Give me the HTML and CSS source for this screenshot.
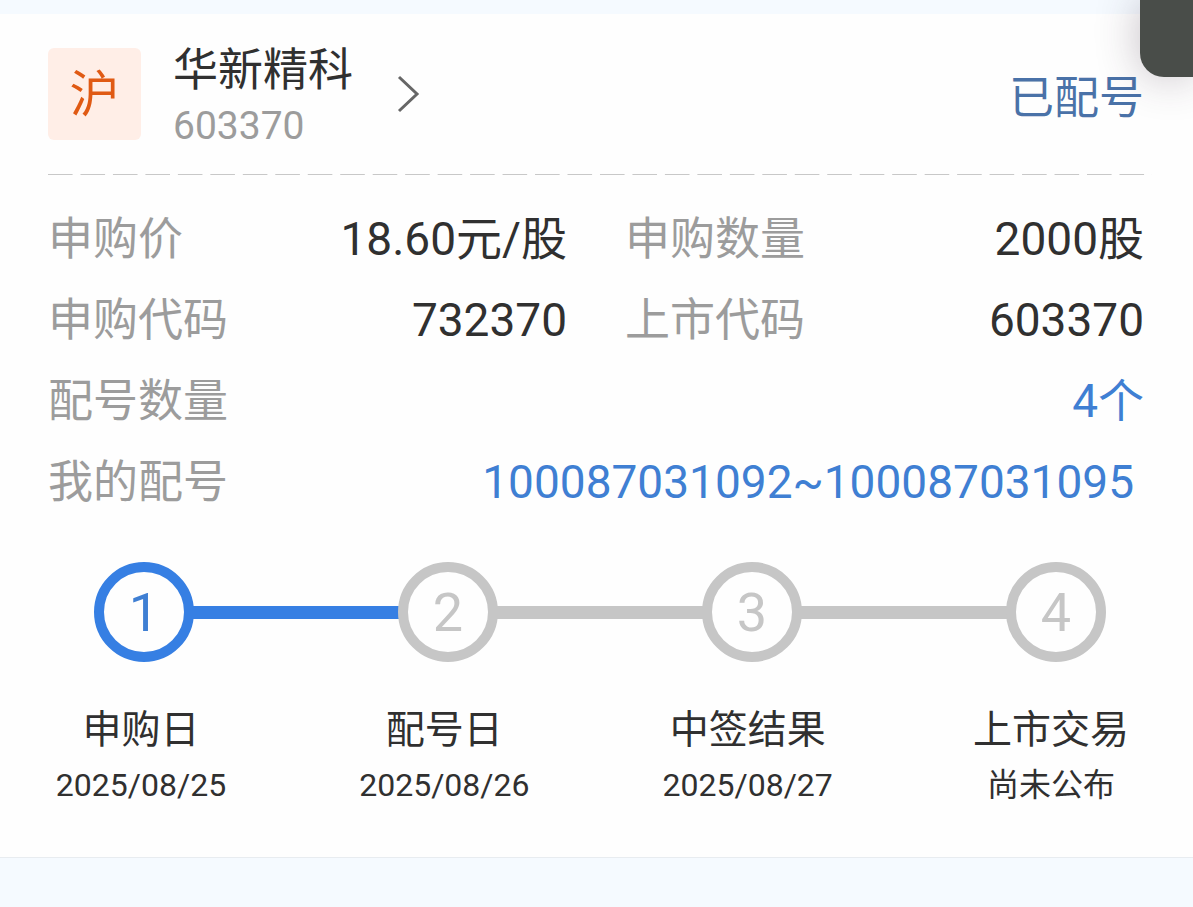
FILE: index.html
```html
<!DOCTYPE html>
<html lang="zh-CN">
<head>
    <meta charset="UTF-8">
    <meta name="viewport" content="width=device-width, initial-scale=1.0">
    <title>华新精科 603370</title>
    <link rel="stylesheet" href="styles.css">
</head>
<body>
    <div class="corner"></div>

    <main class="card">
        <header class="header">
            <a class="stock" href="#">
                <span class="market">沪</span>
                <span class="stock-info">
                    <span class="stock-name">华新精科</span>
                    <span class="stock-code">603370</span>
                </span>
                <svg class="chevron" width="24" height="40" viewBox="0 0 24 40" fill="none" stroke="#666" stroke-width="3">
                    <path d="M2 3 L20 20 L2 37"/>
                </svg>
            </a>
            <span class="status">已配号</span>
        </header>

        <div class="divider"></div>

        <dl class="details">
            <div class="row">
                <dt>申购价</dt>
                <dd>18.60元/股</dd>
            </div>
            <div class="row">
                <dt>申购数量</dt>
                <dd>2000股</dd>
            </div>
            <div class="row">
                <dt>申购代码</dt>
                <dd>732370</dd>
            </div>
            <div class="row">
                <dt>上市代码</dt>
                <dd>603370</dd>
            </div>
            <div class="row wide">
                <dt>配号数量</dt>
                <dd class="blue">4个</dd>
            </div>
            <div class="row wide">
                <dt>我的配号</dt>
                <dd class="blue numbers">100087031092~100087031095</dd>
            </div>
        </dl>

        <div class="track">
            <span class="circle active">1</span>
            <span class="line active"></span>
            <span class="circle">2</span>
            <span class="line"></span>
            <span class="circle">3</span>
            <span class="line"></span>
            <span class="circle">4</span>
        </div>

        <ol class="steps">
            <li><span class="step-name">申购日</span><span class="step-date">2025/08/25</span></li>
            <li><span class="step-name">配号日</span><span class="step-date">2025/08/26</span></li>
            <li><span class="step-name">中签结果</span><span class="step-date">2025/08/27</span></li>
            <li><span class="step-name">上市交易</span><span class="step-date">尚未公布</span></li>
        </ol>
    </main>
</body>
</html>
```
FILE: styles.css
```css
* {
    box-sizing: border-box;
}
body {
    margin: 0;
    padding: 14px 0 50px;
    background-color: #f5faff;
    color: #303030;
    font-family: Roboto, "Noto Sans CJK SC", sans-serif;
    overflow-x: hidden;
}
.card {
    background-color: #fefefe;
    border-bottom: 1px solid #e8ecf0;
    padding: 26px 49px 46px 48px;
}

/* dark floating panel in the corner */
.corner {
    position: absolute;
    top: 0;
    right: 0;
    width: 53px;
    height: 77px;
    background-color: #494d49;
    border-bottom-left-radius: 24px;
    box-shadow: 0 0 44px rgba(60, 40, 60, 0.3);
}

.header {
    display: flex;
    justify-content: space-between;
    align-items: center;
    height: 108px;
}
.stock {
    display: flex;
    align-items: center;
    color: inherit;
    text-decoration: none;
}
.market {
    width: 93px;
    height: 92px;
    margin-right: 32px;
    border-radius: 6px;
    background-color: #ffeee7;
    color: #e05a14;
    font-size: 50px;
    line-height: 94px;
    text-align: center;
}
.stock-info {
    display: flex;
    flex-direction: column;
    padding-top: 6px;
}
.stock-name {
    font-size: 45px;
    line-height: 58px;
}
.stock-code {
    color: #9c9c9c;
    font-size: 39px;
    line-height: 52px;
}
.chevron {
    margin-left: 44px;
}
.status {
    color: #4a72a8;
    font-size: 45px;
}

.divider {
    height: 1px;
    margin: 26px -8px 0 0;
    background-image: linear-gradient(to right, #c8c8c8 75%, transparent 75%);
    background-size: calc(100% / 34) 1px;
}

.details {
    display: grid;
    grid-template-columns: 1fr 1fr;
    column-gap: 58px;
    margin: 24px 0 39px;
}
.row {
    display: flex;
    justify-content: space-between;
    height: 81px;
    line-height: 81px;
}
.wide {
    grid-column: span 2;
}
dt {
    color: #9c9c9c;
    font-size: 45px;
}
dd {
    margin: 0;
    font-size: 46px;
}
.blue {
    color: #3f7fd3;
}
.numbers {
    margin-right: 10px;
}

.track {
    display: flex;
    align-items: center;
    padding: 0 38px 0 46px;
}
.circle {
    width: 100px;
    height: 100px;
    border: 10px solid #c6c6c6;
    border-radius: 50%;
    color: #c6c6c6;
    font-size: 54px;
    line-height: 82px;
    text-align: center;
}
.circle.active {
    border-color: #367fe3;
    color: #3f7fd3;
}
.line {
    flex: 1;
    height: 13px;
    margin: 0 -2px;
    background-color: #c6c6c6;
}
.line.active {
    background-color: #367fe3;
}

.steps {
    display: flex;
    justify-content: space-between;
    list-style: none;
    margin: 39px 0 0;
    padding: 0;
}
.steps li {
    display: flex;
    flex-direction: column;
    width: 186px;
    text-align: center;
}
.step-name {
    font-size: 39px;
    line-height: 58px;
}
.step-date {
    font-size: 32px;
    line-height: 52px;
}
```
